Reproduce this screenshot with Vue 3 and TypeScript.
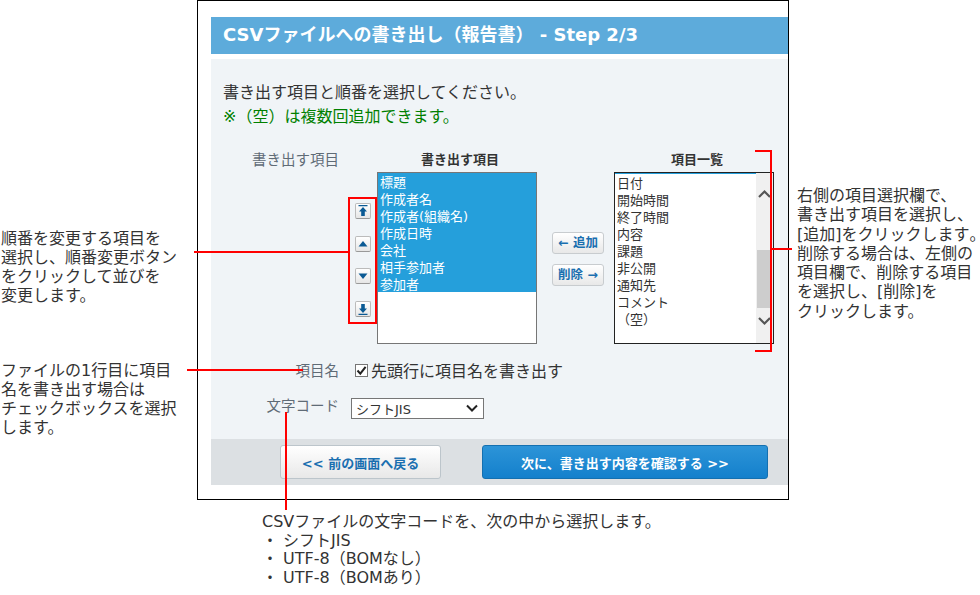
<script setup lang="ts">
const selectedItems: string[] = ['標題', '作成者名', '作成者(組織名)', '作成日時', '会社', '相手参加者', '参加者']
const availableItems: string[] = ['日付', '開始時間', '終了時間', '内容', '課題', '非公開', '通知先', 'コメント', '（空）']
type Move = { name: string; path: string }
const moves: Move[] = [
  { name: 'top', path: 'M2.5 1h9v1.2h-9zM7 3 11 7.5H8.8V12H5.2V7.5H3z' },
  { name: 'up', path: 'M7 4 11.5 9.5h-9z' },
  { name: 'down', path: 'M2.5 4.5h9L7 10z' },
  { name: 'bottom', path: 'M2.5 11.8h9V13h-9zM7 11 3 6.5h2.2V2h3.6v4.5H11z' },
]
</script>

<template>
  <div class="stage">
    <main class="window">
      <h1 class="title">CSVファイルへの書き出し（報告書） - Step 2/3</h1>
      <section class="panel">
        <div class="body">
          <p class="intro">書き出す項目と順番を選択してください。</p>
          <p class="intro note">※（空）は複数回追加できます。</p>

          <div class="picker">
            <div class="row-label picker-label">書き出す項目</div>
            <div class="order">
              <button v-for="m in moves" :key="m.name" class="order-btn" type="button">
                <svg width="14" height="14" viewBox="0 0 14 14"><path :d="m.path" fill="#0b5a94" /></svg>
              </button>
            </div>
            <div class="list-col">
              <div class="list-head">書き出す項目</div>
              <div class="list list-left">
                <div v-for="s in selectedItems" :key="s" class="item selected">{{ s }}</div>
              </div>
            </div>
            <div class="transfer">
              <button class="small-btn" type="button">← 追加</button>
              <button class="small-btn" type="button">削除 →</button>
            </div>
            <div class="list-col">
              <div class="list-head">項目一覧</div>
              <div class="list list-right">
                <div class="items">
                  <div v-for="a in availableItems" :key="a" class="item">{{ a }}</div>
                </div>
                <div class="scrollbar">
                  <svg class="chev chev-up" width="17" height="12" viewBox="0 0 17 12"><path d="M3 9 8.5 3.5 14 9" fill="none" stroke="#555" stroke-width="2.2" /></svg>
                  <div class="thumb"></div>
                  <svg class="chev chev-down" width="17" height="12" viewBox="0 0 17 12"><path d="M3 3 8.5 8.5 14 3" fill="none" stroke="#555" stroke-width="2.2" /></svg>
                </div>
              </div>
            </div>
          </div>

          <div class="name-row">
            <div class="row-label name-label">項目名</div>
            <label class="check">
              <span class="box">
                <svg width="13" height="13" viewBox="0 0 13 13"><path d="M2.5 6.5 5.3 9.6 10.6 2.8" fill="none" stroke="#222" stroke-width="2" /></svg>
              </span>
              <span class="check-text">先頭行に項目名を書き出す</span>
            </label>
          </div>

          <div class="code-row">
            <div class="row-label code-label">文字コード</div>
            <div class="select">
              <span>シフトJIS</span>
              <svg width="14" height="9" viewBox="0 0 14 9"><path d="M2 1.5 7 6.5 12 1.5" fill="none" stroke="#222" stroke-width="2" /></svg>
            </div>
          </div>
        </div>

        <footer class="footer">
          <button class="back" type="button">&lt;&lt; 前の画面へ戻る</button>
          <button class="next" type="button">次に、書き出す内容を確認する &gt;&gt;</button>
        </footer>
      </section>
    </main>

    <!-- callouts -->
    <div class="mark box-order"></div>
    <div class="mark line h1"></div>
    <div class="mark bracket"></div>
    <div class="mark line h2"></div>
    <div class="mark line h3"></div>
    <div class="mark line v1"></div>

    <p class="callout c1">順番を変更する項目を<br />選択し、順番変更ボタン<br />をクリックして並びを<br />変更します。</p>
    <p class="callout c2">ファイルの1行目に項目<br />名を書き出す場合は<br />チェックボックスを選択<br />します。</p>
    <p class="callout c3">右側の項目選択欄で、<br />書き出す項目を選択し、<br />[追加]をクリックします<span class="tight">。</span><br />削除する場合は、左側の<br />項目欄で、削除する項目<br />を選択し、[削除]を<br />クリックします。</p>
    <p class="callout c4">CSVファイルの文字コードを、次の中から選択します。<br />・ シフトJIS<br />・ UTF-8（BOMなし）<br />・ UTF-8（BOMあり）</p>
  </div>
</template>

<style scoped>
.stage {
  position: relative;
  width: 980px;
  height: 595px;
  overflow: hidden;
  background: #fff;
  color: #333;
  font-family: "DejaVu Sans", "Noto Sans CJK JP", sans-serif;
}
.window {
  box-sizing: border-box;
  width: 592px;
  height: 500px;
  margin-left: 197px;
  padding: 16px 0 0 13px;
  border: 1px solid #000;
  background: #fff;
}
.title {
  box-sizing: border-box;
  height: 37px;
  margin: 0 0 5px;
  padding-left: 12px;
  background: #5dabdb;
  color: #fff;
  font-size: 18px;
  font-weight: 700;
  line-height: 36px;
  white-space: nowrap;
}
.panel {
  height: 426px;
  background: #f0f4f7;
  display: flex;
  flex-direction: column;
}
.body {
  flex: 1;
  padding-top: 22px;
}
.intro {
  margin: 0;
  padding-left: 12px;
  font-size: 16px;
  line-height: 24px;
  white-space: nowrap;
}
.note {
  color: #008000;
}
.row-label {
  width: 128px;
  flex: none;
  text-align: right;
  font-size: 14.5px;
  line-height: 20px;
  color: #5f6b76;
  white-space: nowrap;
}
.picker {
  display: flex;
  margin-top: 21px;
}
.picker-label {
  margin-top: 0;
}
.order {
  width: 22px;
  margin: 53px 0 27px 16px;
  flex: none;
  display: flex;
  flex-direction: column;
  justify-content: space-between;
  height: 114px;
}
.order-btn {
  box-sizing: border-box;
  width: 16px;
  height: 16px;
  padding: 0;
  border: 1px solid #bbb;
  border-bottom-color: #999;
  border-radius: 2px;
  background: linear-gradient(#fff, #e6e6e6);
  display: flex;
  align-items: center;
  justify-content: center;
}
.list-col {
  width: 160px;
  flex: none;
}
.list-head {
  height: 22px;
  padding-left: 6px;
  box-sizing: border-box;
  font-size: 13px;
  font-weight: 700;
  line-height: 20px;
  text-align: center;
  white-space: nowrap;
}
.list {
  box-sizing: border-box;
  width: 160px;
  height: 172px;
  background: #fff;
  font-size: 13px;
}
.list-left {
  border: 1px solid #767676;
}
.list-right {
  border: 1px solid #222;
  display: flex;
}
.items {
  flex: 1;
  padding-top: 1px;
  box-shadow: inset 0 1px #259fdb;
}
.item {
  height: 17px;
  padding-left: 2px;
  line-height: 19px;
  white-space: nowrap;
}
.selected {
  background: #259fdb;
  color: #fff;
}
.scrollbar {
  width: 17px;
  flex: none;
  background: #f0f0f0;
  position: relative;
}
.thumb {
  position: absolute;
  left: 1px;
  right: 1px;
  top: 77px;
  height: 58px;
  background: #cdcdcd;
}
.chev {
  position: absolute;
  left: 0;
}
.chev-up {
  top: 15px;
}
.chev-down {
  bottom: 16px;
}
.transfer {
  width: 77px;
  flex: none;
  box-sizing: border-box;
  padding: 82px 10px 0 15px;
  display: flex;
  flex-direction: column;
  gap: 10px;
}
.small-btn {
  box-sizing: border-box;
  width: 52px;
  height: 22px;
  padding: 0;
  border: 1px solid #c8cccf;
  border-radius: 3px;
  background: linear-gradient(#fff, #e8e8e8);
  color: #1a6fb0;
  font-family: inherit;
  font-size: 12.5px;
  font-weight: 700;
  line-height: 20px;
  white-space: nowrap;
}
.name-row {
  display: flex;
  align-items: center;
  height: 24px;
  margin-top: 14px;
}
.name-label {
  padding-top: 1px;
}
.check {
  display: flex;
  align-items: center;
  margin-left: 16px;
  font-size: 16px;
  line-height: 24px;
  white-space: nowrap;
}
.check-text {
  padding-top: 4px;
}
.box {
  box-sizing: border-box;
  width: 13px;
  height: 13px;
  margin-right: 3px;
  border: 1px solid #767676;
  background: #fff;
  display: flex;
  align-items: center;
  justify-content: center;
}
.box svg {
  flex: none;
}
.code-row {
  display: flex;
  margin-top: 16px;
}
.code-label {
  margin-top: -2px;
}
.select {
  box-sizing: border-box;
  width: 133px;
  height: 21px;
  margin-left: 12px;
  padding: 0 4px;
  border: 1px solid #767676;
  background: #fff;
  font-size: 13px;
  display: flex;
  align-items: center;
  justify-content: space-between;
}
.footer {
  height: 46px;
  flex: none;
  background: #dce0e3;
  box-sizing: border-box;
  padding: 6px 20px 0 69px;
  display: flex;
  gap: 41px;
}
.back,
.next {
  box-sizing: border-box;
  height: 34px;
  padding: 0;
  border-radius: 3px;
  font-family: inherit;
  font-size: 13px;
  font-weight: 700;
  white-space: nowrap;
}
.back {
  width: 161px;
  border: 1px solid #bcc5cb;
  background: linear-gradient(#fff, #e8e8e8);
  color: #1a6fb0;
}
.next {
  width: 286px;
  border: 1px solid #1470b0;
  background: linear-gradient(#2c94d8, #1480cc);
  color: #fff;
}
.mark {
  position: absolute;
  box-sizing: border-box;
}
.line {
  background: #f00;
}
.box-order {
  left: 348px;
  top: 197px;
  width: 29px;
  height: 127px;
  border: 2px solid #f00;
}
.h1 {
  left: 194px;
  top: 251px;
  width: 154px;
  height: 2px;
}
.bracket {
  left: 755px;
  top: 150px;
  width: 17px;
  height: 202px;
  border: 2px solid #f00;
  border-left: 0;
}
.h2 {
  left: 772px;
  top: 248px;
  width: 20px;
  height: 2px;
}
.h3 {
  left: 187px;
  top: 369px;
  width: 116px;
  height: 2px;
}
.v1 {
  left: 285px;
  top: 412px;
  width: 2px;
  height: 98px;
}
.callout {
  position: absolute;
  margin: 0;
  font-size: 16px;
  white-space: nowrap;
  color: #333;
}
.tight {
  letter-spacing: -7px;
}
.c1 {
  left: 1px;
  top: 229px;
  line-height: 19px;
}
.c2 {
  left: 1px;
  top: 361px;
  line-height: 19px;
}
.c3 {
  left: 797px;
  top: 186px;
  line-height: 19.3px;
}
.c4 {
  left: 262px;
  top: 513px;
  line-height: 18.7px;
}
</style>
